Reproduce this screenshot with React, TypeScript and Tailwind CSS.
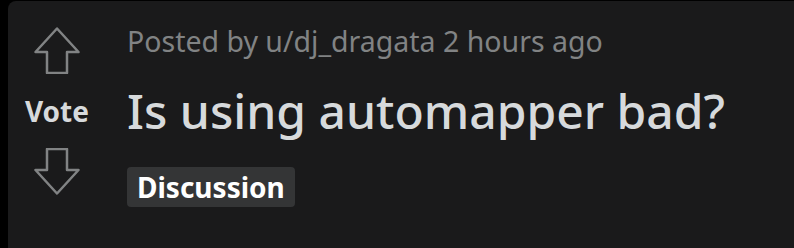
function Arrow({ down = false }: { down?: boolean }) {
  return (
    <svg
      width="48"
      height="48"
      viewBox="0 0 48 48"
      fill="none"
      className={down ? "rotate-180" : ""}
    >
      <path
        d="M24 2.5 L45.5 26 H34 V47 H14 V26 H2.5 Z"
        stroke="#818384"
        strokeWidth="2.5"
        strokeLinejoin="round"
      />
    </svg>
  );
}

export default function App() {
  return (
    <div
      className="h-[248px] w-[794px] overflow-hidden bg-black pl-[8px] pt-[1px]"
      style={{ fontFamily: '"Noto Sans", "Open Sans", sans-serif' }}
    >
      <div className="flex h-full rounded-tl-lg bg-[#1a1a1b]">
        <div className="flex w-[98px] flex-col items-center pt-[25px]">
          <Arrow />
          <div className="mt-[19px] text-[28px] font-bold leading-[36px] text-[#d7dadc]">
            Vote
          </div>
          <div className="mt-[19px]">
            <Arrow down />
          </div>
        </div>
        <div className="flex flex-col items-start pl-[21px] pt-[22px]">
          <div className="text-[28.5px] leading-[36px] text-[#818384]">
            Posted by u/dj_dragata 2 hours ago
          </div>
          <h1 className="mt-[24px] text-[48px] font-medium leading-[56px] text-[#d7dadc]">
            Is using automapper bad?
          </h1>
          <span className="mt-[28px] rounded-[4px] bg-[#343536] px-[10px] text-[28px] font-bold leading-[40px] text-white">
            Discussion
          </span>
        </div>
      </div>
    </div>
  );
}
